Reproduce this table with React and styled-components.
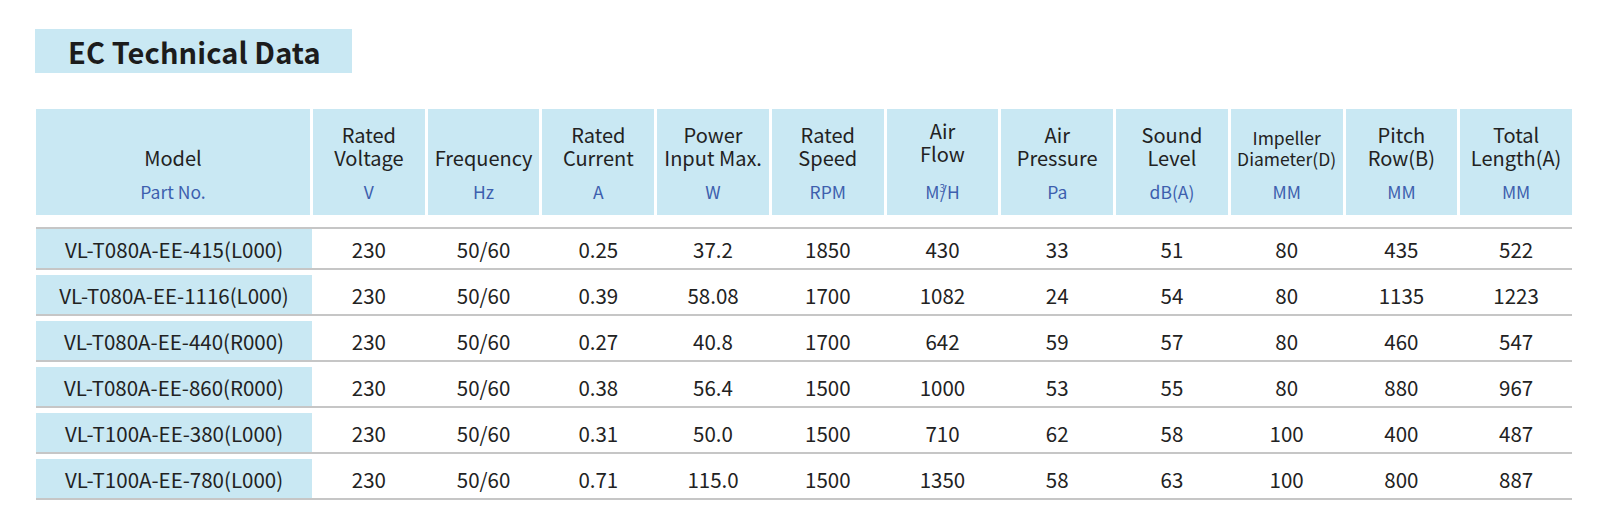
import styled, { createGlobalStyle } from "styled-components";

const GlobalStyle = createGlobalStyle`
  body {
    margin: 0;
    background: #ffffff;
    font-family: "Noto Sans CJK SC", "Noto Sans", sans-serif;
    color: #222222;
  }
`;

const Page = styled.div`
  width: 1600px;
  height: 522px;
  padding: 29px 0 0 36px;
  box-sizing: border-box;
`;

const TitleBox = styled.div`
  width: 317px;
  height: 44px;
  margin-left: -1px;
  background: #c9e8f3;
  display: flex;
  align-items: center;
  padding-left: 33px;
  box-sizing: border-box;
`;

const Title = styled.h1`
  margin: 0;
  font-size: 29px;
  font-weight: 700;
  color: #1c1c1c;
  letter-spacing: 0.1px;
`;

const Table = styled.div`
  width: 1536px;
  margin-top: 36px;
`;

const Grid = styled.div`
  display: grid;
  grid-template-columns: 274px repeat(11, 1fr);
  column-gap: 3px;
`;

const HeadCell = styled.div`
  height: 106px;
  background: #c9e8f3;
  display: flex;
  flex-direction: column;
  align-items: center;
  justify-content: flex-end;
  padding-bottom: 12px;
  box-sizing: border-box;
  text-align: center;
`;

const Label = styled.div`
  font-size: ${(p) => (p.$small ? "17.5px" : "20px")};
  line-height: ${(p) => (p.$small ? "21px" : "23px")};
  color: #222222;
  white-space: nowrap;
`;

const Unit = styled.div`
  margin-top: 12px;
  font-size: 17.5px;
  line-height: 22px;
  color: #3d5fae;
  white-space: nowrap;
`;

const Sup = styled.sup`
  font-size: 10px;
  vertical-align: 7px;
  margin: 0 -5px 0 0;
`;

const Body = styled.div`
  margin-top: 12px;
  border-top: 2px solid #c6c6c6;
`;

const Row = styled(Grid)`
  padding-top: ${(p) => (p.$first ? "0" : "5px")};
  border-bottom: 2px solid #c6c6c6;
`;

const Cell = styled.div`
  height: 39px;
  display: flex;
  align-items: center;
  justify-content: center;
  font-size: 20.5px;
  color: #222222;
  background: ${(p) => (p.$model ? "#c9e8f3" : "transparent")};
  margin-right: ${(p) => (p.$model ? "-2px" : "0")};
  white-space: nowrap;
`;

const headers = [
  { label: ["Model"], unit: "Part No." },
  { label: ["Rated", "Voltage"], unit: "V" },
  { label: ["Frequency"], unit: "Hz" },
  { label: ["Rated", "Current"], unit: "A" },
  { label: ["Power", "Input Max."], unit: "W" },
  { label: ["Rated", "Speed"], unit: "RPM" },
  { label: ["Air", "Flow"], unit: "m3h" },
  { label: ["Air", "Pressure"], unit: "Pa" },
  { label: ["Sound", "Level"], unit: "dB(A)" },
  { label: ["Impeller", "Diameter(D)"], unit: "MM", small: true },
  { label: ["Pitch", "Row(B)"], unit: "MM" },
  { label: ["Total", "Length(A)"], unit: "MM" },
];

const rows = [
  ["VL-T080A-EE-415(L000)", "230", "50/60", "0.25", "37.2", "1850", "430", "33", "51", "80", "435", "522"],
  ["VL-T080A-EE-1116(L000)", "230", "50/60", "0.39", "58.08", "1700", "1082", "24", "54", "80", "1135", "1223"],
  ["VL-T080A-EE-440(R000)", "230", "50/60", "0.27", "40.8", "1700", "642", "59", "57", "80", "460", "547"],
  ["VL-T080A-EE-860(R000)", "230", "50/60", "0.38", "56.4", "1500", "1000", "53", "55", "80", "880", "967"],
  ["VL-T100A-EE-380(L000)", "230", "50/60", "0.31", "50.0", "1500", "710", "62", "58", "100", "400", "487"],
  ["VL-T100A-EE-780(L000)", "230", "50/60", "0.71", "115.0", "1500", "1350", "58", "63", "100", "800", "887"],
];

const App = () => {
  return (
    <>
      <GlobalStyle />
      <Page>
        <TitleBox>
          <Title>EC Technical Data</Title>
        </TitleBox>
        <Table>
          <Grid>
            {headers.map((h, i) => (
              <HeadCell key={i}>
                {h.label.map((l) => (
                  <Label key={l} $small={h.small}>
                    {l}
                  </Label>
                ))}
                <Unit>
                  {h.unit === "m3h" ? (
                    <>
                      M<Sup>3</Sup>/H
                    </>
                  ) : (
                    h.unit
                  )}
                </Unit>
              </HeadCell>
            ))}
          </Grid>
          <Body>
            {rows.map((r, i) => (
              <Row key={i} $first={i === 0}>
                {r.map((v, j) => (
                  <Cell key={j} $model={j === 0}>
                    {v}
                  </Cell>
                ))}
              </Row>
            ))}
          </Body>
        </Table>
      </Page>
    </>
  );
};

export default App;
